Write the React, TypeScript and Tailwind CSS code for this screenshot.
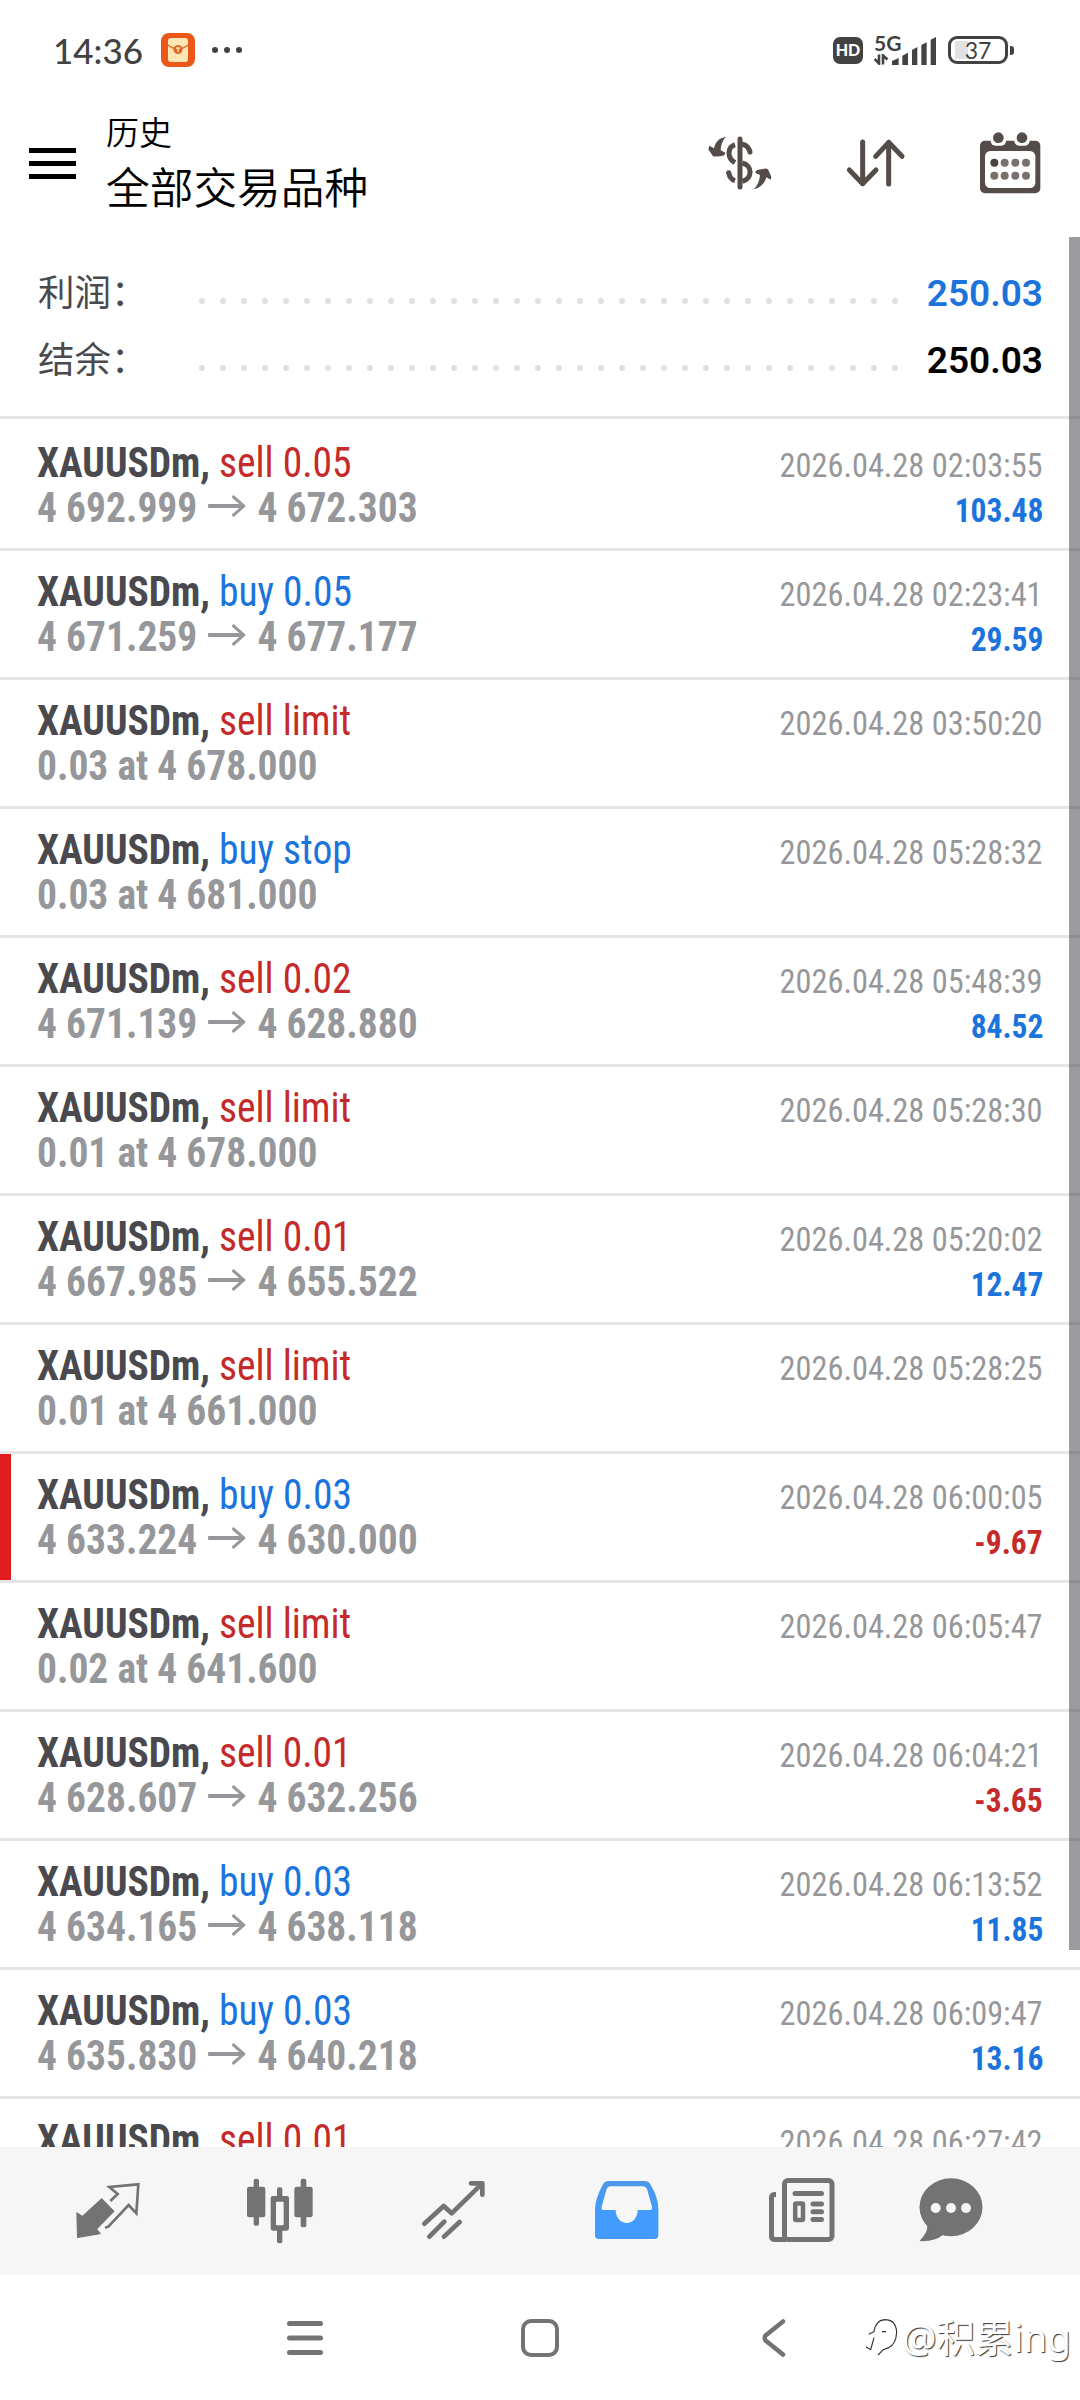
import React from 'react';

interface Deal {
  side: 'buy' | 'sell';
  action: string;
  from?: string;
  to?: string;
  order?: string;
  time: string;
  profit?: string;
  marked?: boolean;
}

const deals: Deal[] = [
  { side: 'sell', action: 'sell 0.05', from: '4 692.999', to: '4 672.303', time: '2026.04.28 02:03:55', profit: '103.48' },
  { side: 'buy', action: 'buy 0.05', from: '4 671.259', to: '4 677.177', time: '2026.04.28 02:23:41', profit: '29.59' },
  { side: 'sell', action: 'sell limit', order: '0.03 at 4 678.000', time: '2026.04.28 03:50:20' },
  { side: 'buy', action: 'buy stop', order: '0.03 at 4 681.000', time: '2026.04.28 05:28:32' },
  { side: 'sell', action: 'sell 0.02', from: '4 671.139', to: '4 628.880', time: '2026.04.28 05:48:39', profit: '84.52' },
  { side: 'sell', action: 'sell limit', order: '0.01 at 4 678.000', time: '2026.04.28 05:28:30' },
  { side: 'sell', action: 'sell 0.01', from: '4 667.985', to: '4 655.522', time: '2026.04.28 05:20:02', profit: '12.47' },
  { side: 'sell', action: 'sell limit', order: '0.01 at 4 661.000', time: '2026.04.28 05:28:25' },
  { side: 'buy', action: 'buy 0.03', from: '4 633.224', to: '4 630.000', time: '2026.04.28 06:00:05', profit: '-9.67', marked: true },
  { side: 'sell', action: 'sell limit', order: '0.02 at 4 641.600', time: '2026.04.28 06:05:47' },
  { side: 'sell', action: 'sell 0.01', from: '4 628.607', to: '4 632.256', time: '2026.04.28 06:04:21', profit: '-3.65' },
  { side: 'buy', action: 'buy 0.03', from: '4 634.165', to: '4 638.118', time: '2026.04.28 06:13:52', profit: '11.85' },
  { side: 'buy', action: 'buy 0.03', from: '4 635.830', to: '4 640.218', time: '2026.04.28 06:09:47', profit: '13.16' },
  { side: 'sell', action: 'sell 0.01', time: '2026.04.28 06:27:42' },
];

function StatusBar() {
  return (
    <div className="flex h-[100px] items-center pl-[53px] pr-[66px] text-[#424242] font-[Lato,sans-serif]">
      <span className="w-[108px] text-[35px] font-medium leading-none">14:36</span>
      <svg width="34" height="34" viewBox="0 0 34 34">
        <rect width="34" height="34" rx="8" fill="#ea5718" />
        <rect x="7" y="5" width="20" height="24" rx="3" fill="#fde6b4" />
        <path d="M7 12 Q17 20 27 12" fill="none" stroke="#e0682c" strokeWidth="1.5" />
        <circle cx="17" cy="16.5" r="4.5" fill="#e0682c" />
        <path d="M15 15h4M17 15v4" stroke="#fde6b4" strokeWidth="1.3" />
      </svg>
      <div className="ml-[17px] flex gap-[6px]">
        <i className="size-[6px] rounded-full bg-[#424242]" />
        <i className="size-[6px] rounded-full bg-[#424242]" />
        <i className="size-[6px] rounded-full bg-[#424242]" />
      </div>

      <div className="ml-auto flex items-center">
        <div className="flex h-[27px] w-[30px] items-center justify-center rounded-[7px] bg-[#424242] text-[16px] font-black leading-none text-white">
          HD
        </div>
        <div className="ml-[11px] flex h-[32px]">
          <div className="flex w-[17px] flex-col">
            <span className="text-[21px] font-bold leading-[18px]">5G</span>
            <svg width="15" height="11" viewBox="0 0 15 11" className="mt-[2px]">
              <path d="M0.5 5L5 9.5V0.5M9 10.5V1.5L13.5 5.5" fill="none" stroke="#424242" strokeWidth="2.6" />
            </svg>
          </div>
          <svg width="46" height="32" viewBox="690 98 138 96">
            <path
              d="M693 191V179L713 170V191ZM724 191V163L741 154V191ZM753 191V146L769 137V191ZM781 191V131L797 123V191ZM809 191V115L825 107V191Z"
              fill="#424242"
            />
          </svg>
        </div>
        <div className="ml-[11px] flex items-center">
          <div className="flex h-[28px] w-[60px] items-center justify-center rounded-[9px] border-[3px] border-[#424242] bg-[linear-gradient(#e2e2e2,#e2e2e2)] bg-[length:13px_18px] bg-[position:4px_center] bg-no-repeat text-[23px] leading-none">
            37
          </div>
          <i className="ml-[2px] h-[9px] w-[4px] rounded-r-[3px] bg-[#424242]" />
        </div>
      </div>
    </div>
  );
}

function CurrencyIcon() {
  return (
    <svg width="66" height="56" viewBox="20 47 198 168" fill="#554c49">
      <g fill="none" stroke="#554c49" strokeWidth="15">
        <path d="M119 59V203" strokeLinecap="round" />
        <path d="M104 76C80 84 80 116 104 130" />
        <path d="M126 75C138 77 145 84 149 98" strokeLinecap="round" />
        <path d="M126 131C157 138 157 178 126 186" />
        <path d="M85 159C87 172 94 181 104 184" />
      </g>
      <circle cx="85" cy="160" r="7.5" />
      <path d="M77 52C56 56 45 68 41 87L27 79L24 90L38 111Q56 113 72 108L75 100L61 93C61 78 66 64 77 52Z" />
      <path d="M160 210C181 205 193 192 198 174L211 181L213 172L203 150Q197 146 192 148L170 152L164 160L179 167C178 184 172 198 160 210Z" />
    </svg>
  );
}

function SortIcon() {
  return (
    <svg width="66" height="54" viewBox="548 409 198 162" fill="none" stroke="#554c49" strokeWidth="15" strokeLinecap="round" strokeLinejoin="round">
      <path d="M607 427V552M567 511L607 552L647 511" />
      <path d="M685 553V428M646 470L685 428L725 470" />
    </svg>
  );
}

function CalendarIcon() {
  return (
    <svg width="66" height="64" viewBox="951 391 198 192" className="-ml-[2px]">
      <rect x="960" y="420" width="181" height="158" rx="15" fill="#554c49" />
      <rect x="975" y="451" width="151" height="111" rx="16" fill="#fff" />
      <rect x="992" y="392" width="46" height="43" rx="14" fill="#fff" />
      <rect x="1063" y="392" width="46" height="43" rx="14" fill="#fff" />
      <circle cx="1015" cy="411" r="16" fill="#554c49" />
      <circle cx="1086" cy="411" r="16" fill="#554c49" />
      {[486, 525].map(cy =>
        [1003, 1034, 1066, 1098].map(cx => (
          <circle key={`${cx}-${cy}`} cx={cx} cy={cy} r="12" fill={cx === 1003 && cy === 486 ? '#4a4240' : '#77706c'} />
        ))
      )}
    </svg>
  );
}

function Header() {
  return (
    <header className="flex h-[137px] pl-[29px] pr-[37px] text-black">
      <button className="mt-[48px] flex h-[31px] w-[47px] flex-col justify-between">
        <i className="h-[5px] w-full bg-black" />
        <i className="h-[5px] w-full bg-black" />
        <i className="h-[5px] w-full bg-black" />
      </button>
      <div className="ml-[30px] mt-[4px] font-['Noto_Sans_CJK_SC',sans-serif] font-[350]">
        <p className="text-[33px] leading-[54px]">历史</p>
        <p className="text-[43.7px] leading-[54px]">全部交易品种</p>
      </div>
      <div className="ml-auto flex h-[126px] items-center gap-[70px]">
        <CurrencyIcon />
        <SortIcon />
        <CalendarIcon />
      </div>
    </header>
  );
}

function SummaryRow({ label, value, valueClass }: { label: string; value: string; valueClass: string }) {
  return (
    <div className="flex h-[67px] items-center">
      <span className="mt-[1px] w-[161px] text-[36.5px] text-[#4a494e] font-['Noto_Sans_CJK_SC',sans-serif]">{label}</span>
      <div className="mt-[21px] flex w-[699px] justify-between">
        {Array.from({ length: 34 }, (_, i) => (
          <i key={i} className="size-[6px] rounded-full bg-[#e0e0e0]" />
        ))}
      </div>
      <span className={`ml-auto mt-[6px] text-[37px] font-semibold font-[Roboto,sans-serif] ${valueClass}`}>{value}</span>
    </div>
  );
}

function DealRow({ deal }: { deal: Deal }) {
  const loss = deal.profit?.startsWith('-');

  return (
    <div className="flex h-[129px] shrink-0 border-b-[3px] border-[#e5e5e5] first:h-[132px] first:pt-[3px]">
      <i className={`h-full w-[11px] ${deal.marked ? 'bg-[#e11c1f]' : ''}`} />
      <div className="flex-1 pl-[26px] pr-[37px] pt-[18px] leading-[45px]">
        <div className="flex h-[45px] items-baseline justify-between">
          <span className="origin-left scale-x-[.94] text-[42px]">
            <b className="text-[#4a494e]">XAUUSDm,</b>{' '}
            <span className={deal.side === 'buy' ? 'text-[#1b74dc]' : 'text-[#c42a2a]'}>{deal.action}</span>
          </span>
          <span className="origin-right scale-x-[.951] text-[34px] text-[#96979a]">{deal.time}</span>
        </div>
        <div className="flex h-[45px] items-baseline justify-between font-bold">
          <span className="origin-left scale-x-[.94] text-[42px] text-[#96979a]">
            {deal.order}
            {deal.from && (
              <>
                {deal.from}
                <svg width="40" height="22" viewBox="0 0 40 22" className="mx-[12px] mb-[5px] inline-block align-baseline" fill="none" stroke="#96979a">
                  <path d="M0 11H38" strokeWidth="4" />
                  <path d="M26 1L38 11L26 21" strokeWidth="3" />
                </svg>
                {deal.to}
              </>
            )}
          </span>
          {deal.profit && (
            <span className={`origin-right scale-x-[.94] text-[33.5px] ${loss ? 'text-[#c42a2a]' : 'text-[#1b74dc]'}`}>
              {deal.profit}
            </span>
          )}
        </div>
      </div>
    </div>
  );
}

function TabBar() {
  return (
    <nav className="flex h-[128px] items-center bg-[#f6f6f7] pl-[21px]">
      <div className="flex w-[173.5px] justify-center">
        <svg width="70" height="62" viewBox="38 63 210 186">
          <path d="M50 162L66 173L124 120L160 157L108 210L119 224L52 235Z" fill="#737373" stroke="#737373" strokeWidth="4" strokeLinejoin="round" />
          <path d="M150 126L172 105L147 84L234 76L228 163L205 138L144 203L134 206" fill="none" stroke="#737373" strokeWidth="8" />
        </svg>
      </div>
      <div className="flex w-[173.5px] justify-center">
        <svg width="70" height="70" viewBox="559 47 210 210" fill="#737373">
          <rect x="582" y="55" width="16" height="141" rx="6" />
          <rect x="562" y="79" width="55" height="92" rx="7" />
          <rect x="652" y="81" width="16" height="168" rx="6" />
          <rect x="633" y="107" width="55" height="104" rx="7" />
          <rect x="649" y="124" width="23" height="71" rx="3" fill="#f6f6f7" />
          <rect x="723" y="55" width="17" height="146" rx="6" />
          <rect x="704" y="79" width="55" height="92" rx="7" />
        </svg>
      </div>
      <div className="flex w-[173.5px] justify-center">
        <svg width="70" height="66" viewBox="59 54 210 198" fill="none" stroke="#737373" strokeWidth="14" strokeLinecap="round" strokeLinejoin="round">
          <path d="M72 191L130 138L154 160L242 74M212 70H246V104" />
          <path d="M87 230L132 185M131 230L178 186" />
        </svg>
      </div>
      <div className="flex w-[173.5px] justify-center">
        <svg width="70" height="66" viewBox="580 54 210 198">
          <defs>
            <linearGradient id="tray" x1="0" y1="0" x2="0" y2="1">
              <stop offset="0" stopColor="#4e98e8" />
              <stop offset="0.5" stopColor="#429bfd" />
            </linearGradient>
          </defs>
          <path
            fill="url(#tray)"
            fillRule="evenodd"
            d="M627 63H735Q746 63 752 73Q776 113 776 146V226Q776 237 765 237H597Q586 237 586 226V146Q588 113 610 73Q616 63 627 63ZM632 79Q624 79 621 87L606 140Q604 150 613 150H648A33 39 0 0 0 714 150H750Q759 150 757 140L742 87Q738 79 730 79Z"
          />
        </svg>
      </div>
      <div className="flex w-[173.5px] justify-center">
        <svg width="72" height="72" viewBox="766 2175 72 72" fill="none" stroke="#737373" strokeWidth="5" strokeLinecap="round">
          <rect x="784.5" y="2180.5" width="47.5" height="59" rx="3.5" />
          <path d="M776 2194.5H774.5Q771.5 2194.5 771.5 2198V2236Q771.5 2239.5 775 2239.5H786" strokeLinecap="butt" />
          <path d="M795 2193.5H821.5M813 2204H821.5M813 2211.7H821.5M813 2219.5H821.5" />
          <rect x="795.2" y="2203.5" width="7.8" height="16.5" rx="1" strokeWidth="4.5" />
        </svg>
      </div>
      <div className="flex w-[125px] justify-center">
        <svg width="72" height="72" viewBox="915 2175 72 72" fill="#737373">
          <ellipse cx="951" cy="2207.2" rx="31.5" ry="29" />
          <path d="M927 2224Q929 2231 919.5 2241Q934 2242 943 2235Z" />
          <circle cx="935.7" cy="2208" r="5" fill="#f6f6f7" />
          <circle cx="951" cy="2208" r="5" fill="#f6f6f7" />
          <circle cx="966" cy="2208" r="5" fill="#f6f6f7" />
        </svg>
      </div>
    </nav>
  );
}

function SystemBar() {
  return (
    <div className="relative flex h-[125px] items-center justify-center bg-white">
      <div className="flex w-[235px] justify-center">
        <svg width="38" height="38" viewBox="0 0 38 38" stroke="#737373" strokeWidth="5" strokeLinecap="round">
          <path d="M3.5 4.5H34.5M3.5 19H34.5M3.5 33.5H34.5" />
        </svg>
      </div>
      <div className="flex w-[235px] justify-center">
        <i className="size-[38px] rounded-[10px] border-[4.5px] border-[#737373]" />
      </div>
      <div className="flex w-[235px] justify-center">
        <svg width="26" height="40" viewBox="0 0 26 40" fill="none" stroke="#737373" strokeWidth="4.5" strokeLinecap="round" strokeLinejoin="round">
          <path d="M21 3.5L3.5 17.5Q2 20 3.5 22.5L21 36.5" />
        </svg>
      </div>

      {/* author signature over the bar */}
      <div className="absolute bottom-[38px] right-[9px] flex items-center text-white">
        <svg width="38" height="46" viewBox="14 66 114 136" fill="none" stroke="#333" strokeWidth="3.5">
          <path d="M20 164L34 172L44 136M28 126L44 118Q48 84 76 82Q110 82 112 120Q110 156 88 166L72 172L56 188M68 118H80" />
        </svg>
        <span className="text-[38.5px] leading-[50px] font-['Noto_Sans','Noto_Sans_CJK_SC',sans-serif] [text-shadow:1px_1px_1px_rgba(0,0,0,.8)]">@积累ing</span>
      </div>
    </div>
  );
}

export default function App() {
  return (
    <div className="flex h-[2400px] w-[1080px] flex-col overflow-hidden bg-white">
      <StatusBar />
      <Header />
      <main className="relative flex min-h-0 flex-1 flex-col overflow-hidden">
        <section className="h-[182px] shrink-0 border-b-[3px] border-[#e5e5e5] pl-[38px] pr-[37px] pt-[20px]">
          <SummaryRow label="利润：" value="250.03" valueClass="text-[#1b74dc]" />
          <SummaryRow label="结余：" value="250.03" valueClass="text-black" />
        </section>
        <div className="flex flex-col font-['Roboto_Condensed',Roboto,sans-serif]">
          {deals.map(deal => (
            <DealRow key={deal.time} deal={deal} />
          ))}
        </div>
        {/* scroll thumb */}
        <div className="absolute right-0 top-0 h-[1713px] w-[11px] bg-[#39383f]/50" />
      </main>
      <TabBar />
      <SystemBar />
    </div>
  );
}
